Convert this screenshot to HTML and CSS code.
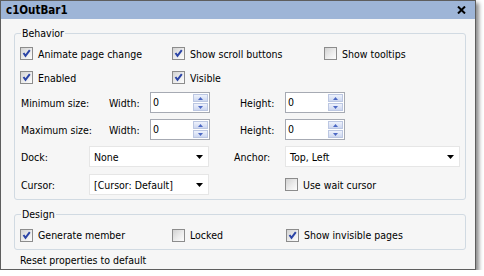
FILE: index.html
```html
<!DOCTYPE html>
<html>
<head>
<meta charset="utf-8">
<link rel="stylesheet" href="styles.css">
</head>
<body>
<div class="window">
  <div class="titlebar">
    <span class="title">c1OutBar1</span>
    <svg class="close" width="9" height="8" viewBox="0 0 9 8"><path d="M1 0.5 L8 7.5 M8 0.5 L1 7.5" stroke="#000" stroke-width="2"/></svg>
  </div>
  <div class="content">
    <fieldset class="group behavior">
      <legend>Behavior</legend>
      <div class="row r1">
        <label class="check c152"><span class="box"><svg width="11" height="11" viewBox="0 0 11 11"><polyline points="2.5,5 4.5,7.8 8.8,2.2" fill="none" stroke="#2b44a6" stroke-width="2"/></svg></span>Animate page change</label>
        <label class="check c152"><span class="box"><svg width="11" height="11" viewBox="0 0 11 11"><polyline points="2.5,5 4.5,7.8 8.8,2.2" fill="none" stroke="#2b44a6" stroke-width="2"/></svg></span>Show scroll buttons</label>
        <label class="check"><span class="box"></span>Show tooltips</label>
      </div>
      <div class="row r2">
        <label class="check c152"><span class="box"><svg width="11" height="11" viewBox="0 0 11 11"><polyline points="2.5,5 4.5,7.8 8.8,2.2" fill="none" stroke="#2b44a6" stroke-width="2"/></svg></span>Enabled</label>
        <label class="check"><span class="box"><svg width="11" height="11" viewBox="0 0 11 11"><polyline points="2.5,5 4.5,7.8 8.8,2.2" fill="none" stroke="#2b44a6" stroke-width="2"/></svg></span>Visible</label>
      </div>
      <div class="row r3">
        <span class="lbl w88">Minimum size:</span>
        <span class="lbl w42">Width:</span>
        <div class="spin"><span class="val">0</span><span class="btns"><span class="sb"><svg width="5" height="3" viewBox="0 0 5 3"><polygon points="0,3 2.5,0 5,3" fill="#4c68c4"/></svg></span><span class="sb"><svg width="5" height="3" viewBox="0 0 5 3"><polygon points="0,0 5,0 2.5,3" fill="#4c68c4"/></svg></span></span></div>
        <span class="lbl hlbl">Height:</span>
        <div class="spin"><span class="val">0</span><span class="btns"><span class="sb"><svg width="5" height="3" viewBox="0 0 5 3"><polygon points="0,3 2.5,0 5,3" fill="#4c68c4"/></svg></span><span class="sb"><svg width="5" height="3" viewBox="0 0 5 3"><polygon points="0,0 5,0 2.5,3" fill="#4c68c4"/></svg></span></span></div>
      </div>
      <div class="row r4">
        <span class="lbl w88">Maximum size:</span>
        <span class="lbl w42">Width:</span>
        <div class="spin"><span class="val">0</span><span class="btns"><span class="sb"><svg width="5" height="3" viewBox="0 0 5 3"><polygon points="0,3 2.5,0 5,3" fill="#4c68c4"/></svg></span><span class="sb"><svg width="5" height="3" viewBox="0 0 5 3"><polygon points="0,0 5,0 2.5,3" fill="#4c68c4"/></svg></span></span></div>
        <span class="lbl hlbl">Height:</span>
        <div class="spin"><span class="val">0</span><span class="btns"><span class="sb"><svg width="5" height="3" viewBox="0 0 5 3"><polygon points="0,3 2.5,0 5,3" fill="#4c68c4"/></svg></span><span class="sb"><svg width="5" height="3" viewBox="0 0 5 3"><polygon points="0,0 5,0 2.5,3" fill="#4c68c4"/></svg></span></span></div>
      </div>
      <div class="row r5">
        <span class="lbl w69">Dock:</span>
        <div class="combo c120"><span class="cval">None</span><svg class="arrow" width="7" height="4" viewBox="0 0 7 4"><polygon points="0,0 7,0 3.5,4" fill="#000"/></svg></div>
        <span class="lbl alb">Anchor:</span>
        <div class="combo c175"><span class="cval">Top, Left</span><svg class="arrow" width="7" height="4" viewBox="0 0 7 4"><polygon points="0,0 7,0 3.5,4" fill="#000"/></svg></div>
      </div>
      <div class="row r6">
        <span class="lbl w69">Cursor:</span>
        <div class="combo c120"><span class="cval">[Cursor: Default]</span><svg class="arrow" width="7" height="4" viewBox="0 0 7 4"><polygon points="0,0 7,0 3.5,4" fill="#000"/></svg></div>
        <label class="check wait"><span class="box"></span>Use wait cursor</label>
      </div>
    </fieldset>
    <fieldset class="group design">
      <legend>Design</legend>
      <div class="row rd">
        <label class="check c152"><span class="box"><svg width="11" height="11" viewBox="0 0 11 11"><polyline points="2.5,5 4.5,7.8 8.8,2.2" fill="none" stroke="#2b44a6" stroke-width="2"/></svg></span>Generate member</label>
        <label class="check c114"><span class="box"></span>Locked</label>
        <label class="check"><span class="box"><svg width="11" height="11" viewBox="0 0 11 11"><polyline points="2.5,5 4.5,7.8 8.8,2.2" fill="none" stroke="#2b44a6" stroke-width="2"/></svg></span>Show invisible pages</label>
      </div>
    </fieldset>
    <div class="reset">Reset properties to default</div>
  </div>
</div>
</body>
</html>
```

FILE: styles.css
```css
* { box-sizing: border-box; }
html, body { margin: 0; padding: 0; background: #ffffff; }
body {
  font-family: "DejaVu Sans Condensed", "DejaVu Sans", sans-serif;
  font-size: 10.5px;
  color: #000;
}
.window {
  width: 476px;
  height: 270px;
  border: 1px solid #5e5e5e;
  background: #f6f6f6;
  box-shadow: 3px 3px 4px rgba(0,0,0,0.45);
  display: flex;
  flex-direction: column;
  overflow: hidden;
}
.titlebar {
  height: 18px;
  background: #9eb5d7;
  display: flex;
  align-items: center;
  justify-content: space-between;
  padding: 0 9px 0 5px;
}
.title {
  font-weight: bold;
  font-size: 11.5px;
  line-height: 13px;
}
.close { display: block; }
.content {
  flex: 1;
  display: flex;
  flex-direction: column;
  padding: 8px 9px 0 13px;
}
.group {
  margin: 0;
  min-width: 0;
  border: 1px solid #d1dae2;
  border-radius: 3px;
  padding: 3px 5px 4px 5px;
}
.group legend {
  padding: 0 1px;
  margin-left: 1px;
  line-height: 12px;
}
.design { margin-top: 8px; padding-top: 5px; padding-bottom: 4px; }
.row { display: flex; align-items: center; height: 21px; }
.r1 { margin-top: 1px; }
.r2 { margin-top: 3px; }
.r3 { margin-top: 4px; }
.r4 { margin-top: 6px; }
.r5 { margin-top: 6px; }
.r6 { margin-top: 7px; }
.rd { height: 20px; }
.check { display: flex; align-items: center; white-space: nowrap; }
.c152 { width: 152px; }
.c114 { width: 114px; }
.box {
  width: 13px;
  height: 13px;
  border: 1px solid #8c8c8c;
  background: linear-gradient(135deg, #d2d2d2 0%, #ececec 55%, #fdfdfd 100%);
  margin-right: 5px;
  flex: none;
  display: flex;
}
.box svg { display: block; }
.lbl { white-space: nowrap; padding-left: 1px; }
.w88 { width: 88px; }
.w42 { width: 42px; }
.w69 { width: 69px; }
.hlbl { margin-left: 29px; width: 46px; }
.alb { margin-left: 24px; width: 52px; }
.spin {
  width: 60px;
  height: 21px;
  border: 1px solid #a6aab3;
  background: #fff;
  display: flex;
  padding: 1px 1px 1px 0;
}
.val { flex: 1; padding-left: 2px; line-height: 17px; }
.btns { width: 15px; display: flex; flex-direction: column; gap: 1px; }
.sb {
  flex: 1;
  background: linear-gradient(#eef2fc, #cdd7f0);
  border: 1px solid #bcc7e2;
  display: flex;
  align-items: center;
  justify-content: center;
}
.sb svg { display: block; }
.combo {
  height: 21px;
  background: #fff;
  border: 1px solid #e6e6e6;
  display: flex;
  align-items: center;
  justify-content: space-between;
  padding: 0 5px 0 4px;
}
.c120 { width: 120px; }
.c175 { width: 175px; }
.arrow { display: block; margin-top: 1px; }
.wait { margin-left: 76px; }
.reset { margin-top: 4px; line-height: 13px; padding-left: 6px; }
```
